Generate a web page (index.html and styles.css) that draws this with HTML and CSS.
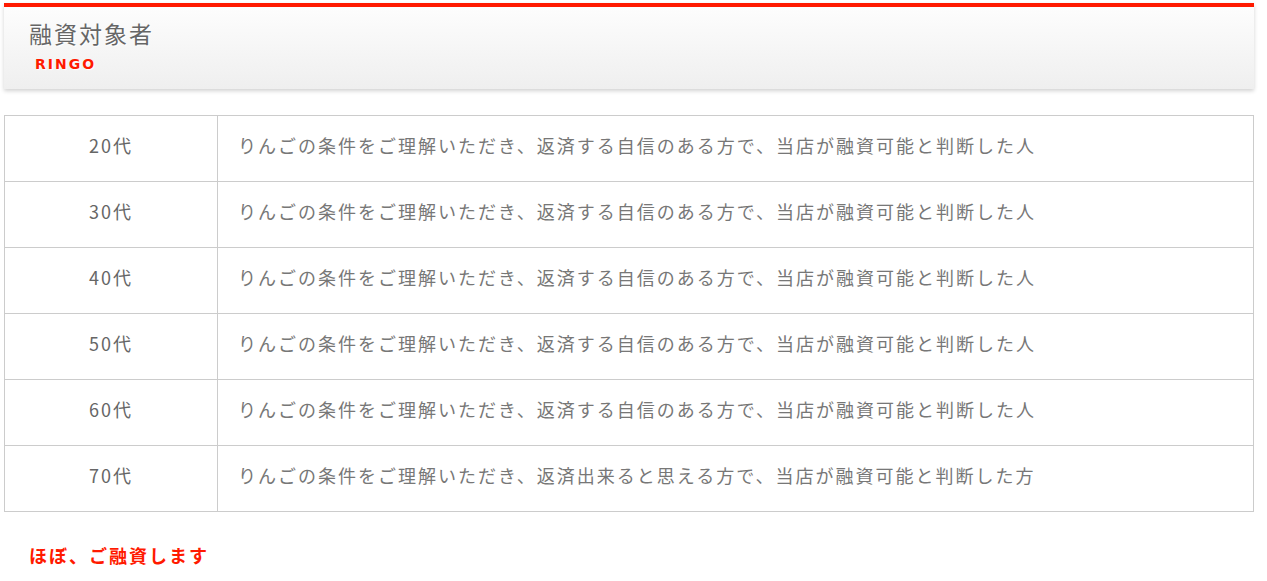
FILE: index.html
```html
<!DOCTYPE html>
<html lang="ja">
<head>
<meta charset="utf-8">
<link rel="stylesheet" href="styles.css">
</head>
<body>
<div class="page">
  <div class="heading">
    <h2 class="heading-title">融資対象者</h2>
    <div class="heading-sub">RINGO</div>
  </div>
  <table class="target">
    <tr><td class="age">20代</td><td class="desc">りんごの条件をご理解いただき、返済する自信のある方で、当店が融資可能と判断した人</td></tr>
    <tr><td class="age">30代</td><td class="desc">りんごの条件をご理解いただき、返済する自信のある方で、当店が融資可能と判断した人</td></tr>
    <tr><td class="age">40代</td><td class="desc">りんごの条件をご理解いただき、返済する自信のある方で、当店が融資可能と判断した人</td></tr>
    <tr><td class="age">50代</td><td class="desc">りんごの条件をご理解いただき、返済する自信のある方で、当店が融資可能と判断した人</td></tr>
    <tr><td class="age">60代</td><td class="desc">りんごの条件をご理解いただき、返済する自信のある方で、当店が融資可能と判断した人</td></tr>
    <tr><td class="age">70代</td><td class="desc">りんごの条件をご理解いただき、返済出来ると思える方で、当店が融資可能と判断した方</td></tr>
  </table>
  <p class="note">ほぼ、ご融資します</p>
</div>
</body>
</html>
```
FILE: styles.css
```css
html, body { margin: 0; padding: 0; background: #fff; }
body { font-family: "Noto Sans CJK JP", "Noto Sans", sans-serif; color: #666; }
.page { padding: 3px 13px 0 4px; }
.heading {
  border-top: 4px solid #ff1a00;
  background: linear-gradient(#fdfdfd, #efefef);
  box-shadow: 0 2px 4px rgba(0,0,0,0.18);
  padding: 0 0 0 25px;
  box-sizing: border-box;
  height: 86px;
}
.heading-title {
  margin: 0;
  padding-top: 11px;
  font-size: 23px;
  letter-spacing: 2px;
  font-weight: normal;
  line-height: 30px;
  color: #666;
  text-shadow: 1px 1px 1px #fff;
}
.heading-sub {
  margin: 8px 0 0 6px;
  font-family: "DejaVu Sans", sans-serif;
  font-weight: bold;
  font-size: 14px;
  letter-spacing: 2px;
  line-height: 16px;
  color: #ff1a00;
  text-shadow: 1px 1px 1px #fff;
}
.target {
  margin-top: 26px;
  width: 100%;
  border-collapse: collapse;
  font-size: 18px;
  letter-spacing: 2px;
}
.target td {
  border: 1px solid #ccc;
  height: 66px;
  padding: 0 0 7px 0;
  box-sizing: border-box;
  vertical-align: middle;
}
.age { width: 213px; text-align: center; color: #666; }
.desc { padding-left: 20px !important; color: #777; }
.note {
  margin: 30px 0 0 25px;
  font-size: 18px;
  letter-spacing: 2px;
  font-weight: bold;
  color: #ff1a00;
}
```
